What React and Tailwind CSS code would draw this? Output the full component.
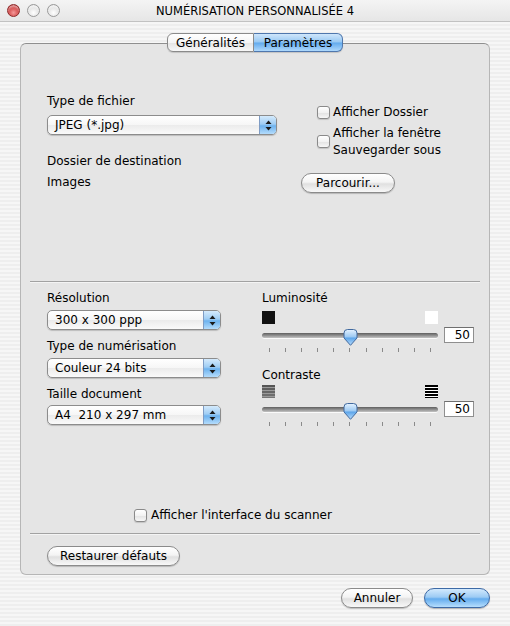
import React from "react";

function Arrows() {
  return (
    <svg width="7" height="11" viewBox="0 0 7 11">
      <path d="M3.5 0.5 L6.5 4 H0.5 Z" fill="#1a1a1a" />
      <path d="M3.5 10.5 L6.5 7 H0.5 Z" fill="#1a1a1a" />
    </svg>
  );
}

function Popup({ w, children }) {
  return (
    <div className={`flex h-[20px] ${w} rounded-[5px] border border-[#8c8c8c] bg-[linear-gradient(#ffffff,#f6f6f6_50%,#ebebeb_51%,#fafafa)] shadow-[0_1px_1px_rgba(0,0,0,0.18)] overflow-hidden`}>
      <div className="flex-1 pl-[7px] leading-[18px] text-[12px] text-black whitespace-pre">{children}</div>
      <div className="w-[17px] border-l border-[#7f9cc4] bg-[linear-gradient(#d4eafc,#9fcdf4_45%,#6db2ee_55%,#b4dcfc)] flex items-center justify-center">
        <Arrows />
      </div>
    </div>
  );
}

function Checkbox() {
  return (
    <div className="w-[13px] h-[13px] shrink-0 rounded-[3px] border border-[#8a8a8a] bg-[linear-gradient(#ffffff,#f2f2f2_50%,#e2e2e2_51%,#f7f7f7)] shadow-[0_1px_1px_rgba(0,0,0,0.15)]" />
  );
}

function Button({ cls, children }) {
  return (
    <div className={`h-[20px] rounded-full border border-[#8b8b8b] bg-[linear-gradient(#ffffff,#f4f4f4_45%,#e0e0e0_55%,#f8f8f8)] shadow-[0_1px_1px_rgba(0,0,0,0.2)] flex items-center justify-center text-[12px] text-black ${cls}`}>
      {children}
    </div>
  );
}

function Thumb() {
  return (
    <svg width="15" height="17" viewBox="0 0 15 17">
      <defs>
        <linearGradient id="tg" x1="0" y1="0" x2="0" y2="1">
          <stop offset="0" stopColor="#e4f2ff" />
          <stop offset="0.45" stopColor="#9fcbf3" />
          <stop offset="0.55" stopColor="#5fa6ea" />
          <stop offset="1" stopColor="#b7dcfb" />
        </linearGradient>
      </defs>
      <path d="M1 4 Q1 0.5 4.5 0.5 H10.5 Q14 0.5 14 4 V9 L7.5 16.3 L1 9 Z" fill="url(#tg)" stroke="#41699e" strokeWidth="1" />
    </svg>
  );
}

function Slider() {
  const ticks = Array.from({ length: 11 });
  return (
    <div className="flex flex-col">
      <div className="flex items-center gap-[6px] h-[18px]">
        <div className="relative w-[176px] h-[18px] flex items-center">
          <div className="w-full h-[5px] rounded-full bg-[linear-gradient(#5e5e5e,#8f8f8f_50%,#c4c4c4)] shadow-[0_1px_0_rgba(255,255,255,0.8)]" />
          <div className="absolute left-[81px] top-[3px]">
            <Thumb />
          </div>
        </div>
        <div className="w-[30px] h-[16px] border border-[#8f8f8f] border-t-[#6f6f6f] bg-white text-right pr-[3px] text-[12px] leading-[14px] text-black">
          50
        </div>
      </div>
      <div className="w-[176px] flex justify-between px-[7px] mt-[4px]">
        {ticks.map((_, i) => (
          <div key={i} className="w-px h-[4px] bg-[#8a8a8a]" />
        ))}
      </div>
    </div>
  );
}

function Light({ red }) {
  return red ? (
    <div className="w-[13px] h-[13px] rounded-full border border-[#8c2a2a] bg-[radial-gradient(circle_at_50%_70%,#f59a9a,#d24848_55%,#a82828)] shadow-[inset_0_2px_2px_rgba(255,255,255,0.5)]" />
  ) : (
    <div className="w-[13px] h-[13px] rounded-full border border-[#9a9a9a] bg-[radial-gradient(circle_at_50%_70%,#ffffff,#e4e4e4_55%,#c4c4c4)] shadow-[inset_0_2px_2px_rgba(255,255,255,0.7)]" />
  );
}

export default function App() {
  return (
    <div className="w-[510px] h-[626px] flex flex-col font-['DejaVu_Sans',sans-serif] text-[12px] text-black bg-[repeating-linear-gradient(to_bottom,#eeeeee_0px,#eeeeee_2px,#f6f6f6_2px,#f6f6f6_4px)] overflow-hidden">
      {/* Title bar */}
      <div className="h-[22px] flex items-center px-[7px] border-b border-[#c2c2c2] bg-[linear-gradient(#f4f4f4,#e6e6e6)]">
        <div className="flex gap-[7px] w-[60px]">
          <Light red />
          <Light />
          <Light />
        </div>
        <div className="flex-1 text-center text-[11.5px] leading-[22px] pt-px">NUMÉRISATION PERSONNALISÉE 4</div>
        <div className="w-[60px]" />
      </div>

      <div className="px-[20px] pt-[11px] flex flex-col">
        {/* Tabs */}
        <div className="flex justify-center relative z-10 -mb-[9px]">
          <div className="flex h-[19px] shadow-[0_1px_1px_rgba(0,0,0,0.15)] rounded-[6px]">
            <div className="w-[87px] rounded-l-[6px] border border-[#8a8a8a] bg-[linear-gradient(#ffffff,#f5f5f5_50%,#e4e4e4_51%,#f8f8f8)] flex items-center justify-center text-[12px]">
              Généralités
            </div>
            <div className="w-[89px] rounded-r-[6px] border border-l-0 border-[#4f77ad] bg-[linear-gradient(#cfe6fb,#97c8f3_48%,#62aaed_52%,#aed8fc)] flex items-center justify-center text-[12px]">
              Paramètres
            </div>
          </div>
        </div>

        {/* Box */}
        <div className="h-[532px] rounded-[6px] border border-[#b6b6b6] border-t-[#8f8f8f] bg-[#e5e5e5] flex flex-col">
          {/* Section 1 */}
          <div className="h-[237px] flex pt-[48px] pl-[26px]">
            <div className="w-[230px] flex flex-col">
              <div className="leading-[16px] pt-px">Type de fichier</div>
              <div className="mt-[6px]">
                <Popup w="w-[230px]">JPEG (*.jpg)</Popup>
              </div>
              <div className="leading-[16px] mt-[18px]">Dossier de destination</div>
              <div className="leading-[16px] mt-[5px]">Images</div>
            </div>
            <div className="ml-[24px] flex flex-col mt-[12px]">
              <div className="ml-[16px] flex items-center gap-[3px] leading-[16px]">
                <Checkbox />
                <span>Afficher Dossier</span>
              </div>
              <div className="ml-[16px] mt-[5px] flex items-center gap-[3px] leading-[16.5px]">
                <Checkbox />
                <span>
                  Afficher la fenêtre
                  <br />
                  Sauvegarder sous
                </span>
              </div>
              <div className="mt-[15px]">
                <Button cls="w-[94px]">Parcourir...</Button>
              </div>
            </div>
          </div>

          <div className="mx-[9px] h-[2px] border-t border-[#a2a2a2] border-b border-b-[#f4f4f4]" />

          {/* Section 2 */}
          <div className="h-[250px] flex flex-col pl-[26px]">
            <div className="flex pt-[7px]">
              <div className="w-[174px] flex flex-col">
                <div className="leading-[16px]">Résolution</div>
                <div className="mt-[4px]">
                  <Popup w="w-[174px]">300 x 300 ppp</Popup>
                </div>
                <div className="leading-[16px] mt-[8px]">Type de numérisation</div>
                <div className="mt-[4px]">
                  <Popup w="w-[174px]">Couleur 24 bits</Popup>
                </div>
                <div className="leading-[16px] mt-[8px]">Taille document</div>
                <div className="mt-[3px]">
                  <Popup w="w-[174px]">A4  210 x 297 mm</Popup>
                </div>
              </div>
              <div className="ml-[41px] w-[212px] flex flex-col">
                <div className="leading-[16px]">Luminosité</div>
                <div className="w-[176px] flex justify-between mt-[5px]">
                  <div className="w-[13px] h-[13px] bg-[#111111]" />
                  <div className="w-[13px] h-[13px] bg-white" />
                </div>
                <div className="mt-[2px]">
                  <Slider />
                </div>
                <div className="leading-[16px] mt-[15px]">Contraste</div>
                <div className="w-[176px] flex justify-between mt-[2px]">
                  <svg width="13" height="13" viewBox="0 0 13 13">
                    <rect x="0" y="0" width="13" height="13" fill="#9a9a9a" />
                    <rect x="0" y="0" width="13" height="2" fill="#555" />
                    <rect x="0" y="3" width="13" height="2" fill="#5e5e5e" />
                    <rect x="0" y="6" width="13" height="2" fill="#666" />
                    <rect x="0" y="9" width="13" height="2" fill="#6e6e6e" />
                    <rect x="0" y="12" width="13" height="1" fill="#777" />
                  </svg>
                  <svg width="13" height="13" viewBox="0 0 13 13">
                    <rect x="0" y="0" width="13" height="13" fill="#ffffff" />
                    <rect x="0" y="0" width="13" height="2" fill="#000" />
                    <rect x="0" y="3" width="13" height="2" fill="#000" />
                    <rect x="0" y="6" width="13" height="2" fill="#000" />
                    <rect x="0" y="9" width="13" height="2" fill="#000" />
                    <rect x="0" y="12" width="13" height="1" fill="#000" />
                  </svg>
                </div>
                <div className="mt-[2px]">
                  <Slider />
                </div>
              </div>
            </div>
            <div className="mt-auto mb-[10px] ml-[87px] flex items-center gap-[4px] leading-[16px]">
              <Checkbox />
              <span>Afficher l'interface du scanner</span>
            </div>
          </div>

          <div className="mx-[9px] h-[2px] border-t border-[#a2a2a2] border-b border-b-[#f4f4f4]" />

          {/* Section 3 */}
          <div className="pl-[26px] pt-[11px]">
            <Button cls="w-[133px]">Restaurer défauts</Button>
          </div>
        </div>

        {/* Bottom buttons */}
        <div className="flex justify-end gap-[11px] mt-[13px]">
          <Button cls="w-[72px]">Annuler</Button>
          <div className="w-[66px] h-[20px] rounded-full border border-[#3d6aa6] bg-[linear-gradient(#d2e9fd,#9ccbf4_45%,#64acee_55%,#b6defd)] shadow-[0_1px_1px_rgba(0,0,0,0.25)] flex items-center justify-center text-[12px]">
            OK
          </div>
        </div>
      </div>
    </div>
  );
}
